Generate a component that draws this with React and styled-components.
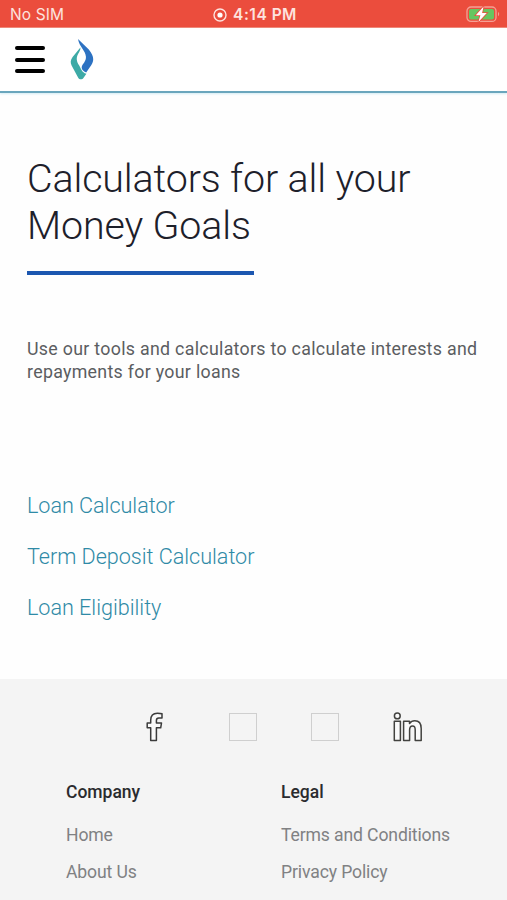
import React from "react";
import styled, { createGlobalStyle } from "styled-components";

const GlobalStyle = createGlobalStyle`
  * {
    box-sizing: border-box;
  }
  body {
    margin: 0;
    background-color: #fefefe;
    font-family: Roboto, sans-serif;
  }
`;

const Page = styled.div`
  height: 900px;
  overflow: hidden;
  display: flex;
  flex-direction: column;
`;

const StatusBar = styled.div`
  height: 28px;
  flex: none;
  display: grid;
  grid-template-columns: 1fr auto 1fr;
  align-items: center;
  padding: 2px 7px 0 10px;
  background-color: #eb4d3d;
  border-bottom: 1px solid #f0806f;
  font-family: Inter, sans-serif;
  color: #fde3df;
`;
const Carrier = styled.span`
  font-size: 15.5px;
  letter-spacing: 0.1px;
`;
const Clock = styled.div`
  display: flex;
  align-items: center;
  gap: 6px;
  font-size: 15.5px;
  font-weight: 600;
  letter-spacing: 0.5px;
`;
const Battery = styled.div`
  display: flex;
  justify-content: flex-end;
`;

const Header = styled.header`
  height: 65px;
  flex: none;
  display: flex;
  align-items: center;
  gap: 25px;
  padding-left: 15px;
  background-color: #fff;
  border-bottom: 2px solid #6aa6bd;
  box-shadow: 0 1px 2px #d3ecf4;
`;
const MenuButton = styled.div`
  width: 30px;
  height: 27px;
  display: flex;
  flex-direction: column;
  justify-content: space-between;
`;
const MenuLine = styled.span`
  height: 4px;
  border-radius: 2px;
  background-color: #000;
`;

const Main = styled.main`
  height: 586px;
  flex: none;
  padding: 62px 27px 0;
`;
const Title = styled.h1`
  margin: 0;
  font-size: 39.4px;
  line-height: 47px;
  font-weight: 300;
  letter-spacing: -0.13px;
  color: #1d202a;
`;
const Rule = styled.div`
  width: 227px;
  height: 4px;
  margin-top: 22px;
  background-color: #1c57b0;
`;
const Intro = styled.p`
  margin: 63px 0 0;
  font-size: 17.8px;
  line-height: 22.6px;
  letter-spacing: 0.3px;
  white-space: nowrap;
  color: #5b5d61;
`;
const LinkList = styled.nav`
  display: flex;
  flex-direction: column;
  margin-top: 97px;
`;
const CalcLink = styled.a`
  font-size: 21.6px;
  line-height: 51px;
  font-weight: 300;
  letter-spacing: -0.03px;
  color: #2f8aa6;
`;

const Footer = styled.footer`
  flex: 1;
  background-color: #f4f4f4;
`;
const Socials = styled.div`
  height: 95px;
  display: grid;
  grid-template-columns: 29px repeat(3, 28px);
  column-gap: 54px;
  align-items: center;
  padding-left: 146px;
`;
const EmptyIcon = styled.div`
  width: 28px;
  height: 28px;
  border: 1px solid #cfcfcf;
`;
const Columns = styled.div`
  display: grid;
  grid-template-columns: 215px 1fr;
  padding-left: 66px;
`;
const ColumnTitle = styled.h4`
  margin: 0 0 6px;
  font-size: 17.5px;
  line-height: 37px;
  font-weight: 500;
  color: #2a2b2e;
`;
const FooterLink = styled.a`
  display: block;
  font-size: 17.6px;
  line-height: 37px;
  letter-spacing: -0.13px;
  color: #808183;
`;

const RecordIcon = () => (
  <svg width="14" height="14" viewBox="0 0 14 14">
    <circle cx="7" cy="7" r="6" fill="none" stroke="#fde3df" strokeWidth="1.4" />
    <circle cx="7" cy="7" r="2.6" fill="#fff" />
  </svg>
);

const BatteryIcon = () => (
  <svg width="34" height="17" viewBox="0 0 34 17">
    <rect x="1" y="1" width="29" height="14.4" rx="4" fill="none" stroke="#f5a094" strokeWidth="1.3" />
    <rect x="3" y="3" width="25" height="10.4" rx="2" fill="#66c660" />
    <path d="M32 6.1v4.2c1.6-.7 1.6-3.5 0-4.2z" fill="#f5a094" />
    <path d="M17.6 .4 9.8 9.2h4.6L12.4 16 20.8 7h-4.7z" fill="#fff" stroke="#eb4d3d" strokeWidth="1.6" paintOrder="stroke" />
  </svg>
);

const Logo = () => (
  <svg width="24" height="41" viewBox="0 0 24 41">
    <path d="M8 0L18.8 10.6C23.9 17 24.4 21.2 21.2 26.2L16.2 33.6C12.4 32 11 29.4 12 27C13.2 24.2 16.2 22 15.9 17.6C15.4 11 9.6 8.6 8 0z" fill="#2d72c2" />
    <path d="M10.4 8.4L2.6 18C.4 21 .2 23.6 1.6 26.4L8.2 38.7C9.4 40.9 12.3 40.8 13.6 38.7L16.4 34.8C11.6 33.6 11.2 29.8 9.2 26.6C6.4 22.2 6 18.8 8.2 14.8C9.6 12.2 10.6 10.8 10.4 8.4z" fill="#3daaa6" />
  </svg>
);

const FacebookIcon = () => (
  <svg width="18" height="30" viewBox="0 0 18 30">
    <path d="M4.7 28.4V15.8H1.2V11H4.7V8.2C4.7 3.5 7.5 1.2 11.4 1.2C13.4 1.2 15 1.3 16 1.7V6H12.8C11 6 10.4 6.9 10.4 8.4V11H15.5L14.7 15.8H10.4V28.4z" fill="#fafafa" stroke="#3b3b3b" strokeWidth="1.5" strokeLinejoin="round" />
  </svg>
);

const LinkedinIcon = () => (
  <svg width="30" height="30" viewBox="0 0 30 30">
    <g fill="#fafafa" stroke="#42423f" strokeWidth="1.5" strokeLinejoin="round">
      <circle cx="4.3" cy="3.9" r="2.9" />
      <path d="M1.3 9.2H7.4V28.5H1.3z" />
      <path d="M10.6 9.2H16.5V11.6C17.8 9.6 19.6 8.8 21.8 8.8C26.4 8.8 28.2 11.8 28.2 16.5V28.5H22.2V18C22.2 15.3 21.4 13.9 19.5 13.9C17.4 13.9 16.6 15.5 16.6 18V28.5H10.6z" />
    </g>
  </svg>
);

class App extends React.Component {
  render() {
    return (
      <Page>
        <GlobalStyle />
        <StatusBar>
          <Carrier>No SIM</Carrier>
          <Clock>
            <RecordIcon />
            4:14 PM
          </Clock>
          <Battery>
            <BatteryIcon />
          </Battery>
        </StatusBar>
        <Header>
          <MenuButton>
            <MenuLine />
            <MenuLine />
            <MenuLine />
          </MenuButton>
          <Logo />
        </Header>
        <Main>
          <Title>
            Calculators for all your
            <br />
            Money Goals
          </Title>
          <Rule />
          <Intro>
            Use our tools and calculators to calculate interests and
            <br />
            repayments for your loans
          </Intro>
          <LinkList>
            <CalcLink>Loan Calculator</CalcLink>
            <CalcLink>Term Deposit Calculator</CalcLink>
            <CalcLink>Loan Eligibility</CalcLink>
          </LinkList>
        </Main>
        <Footer>
          <Socials>
            <FacebookIcon />
            <EmptyIcon />
            <EmptyIcon />
            <LinkedinIcon />
          </Socials>
          <Columns>
            <div>
              <ColumnTitle>Company</ColumnTitle>
              <FooterLink>Home</FooterLink>
              <FooterLink>About Us</FooterLink>
            </div>
            <div>
              <ColumnTitle>Legal</ColumnTitle>
              <FooterLink>Terms and Conditions</FooterLink>
              <FooterLink>Privacy Policy</FooterLink>
            </div>
          </Columns>
        </Footer>
      </Page>
    );
  }
}

export default App;
